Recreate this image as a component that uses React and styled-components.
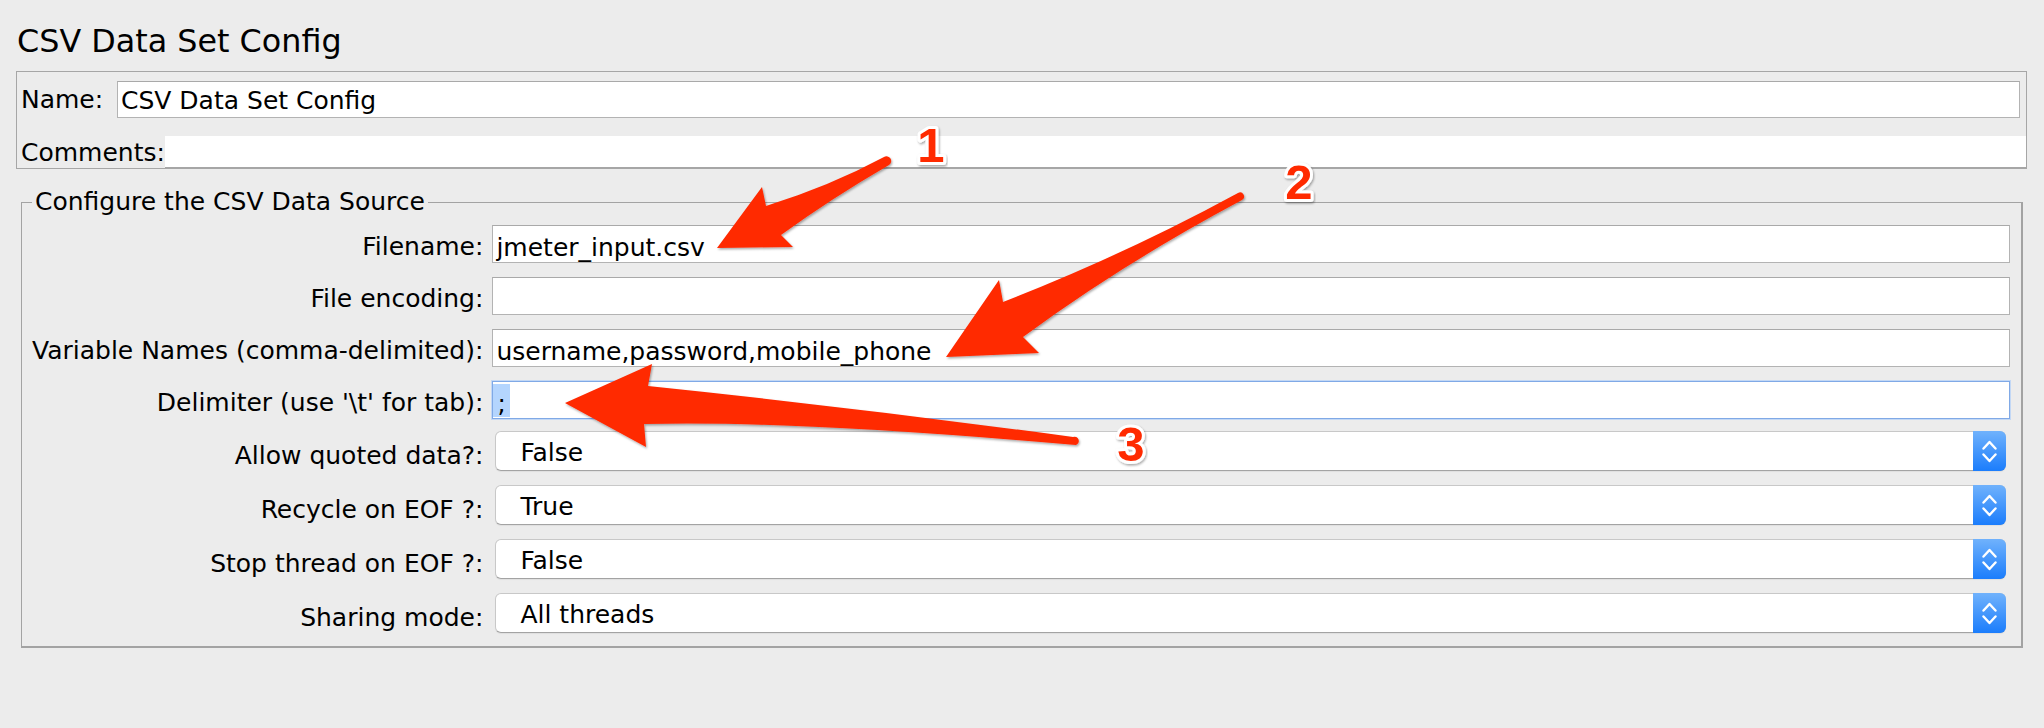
import React from 'react';
import styled, { createGlobalStyle, css } from 'styled-components';

const GlobalStyle = createGlobalStyle`
  html, body {
    margin: 0;
    padding: 0;
    background: #ececec;
  }
  body {
    font-family: "DejaVu Sans", "Liberation Sans", sans-serif;
    color: #000;
  }
`;

const Page = styled.div`
  position: relative;
  width: 2044px;
  height: 728px;
  box-sizing: border-box;
  padding: 21px 17px 0 16px;
  overflow: hidden;
`;

const Title = styled.h1`
  margin: 0 0 10px 1px;
  font-size: 31.8px;
  line-height: 40px;
  font-weight: normal;
`;

const NamePanel = styled.div`
  border: 1px solid #a6a6a6;
  padding: 9px 6px 0 4px;
`;

const NameRow = styled.div`
  display: flex;
  align-items: center;
  height: 37px;
`;

const CommentsRow = styled.div`
  display: flex;
  align-items: stretch;
  height: 32px;
  margin: 18px -6px 0 0;
`;

const Label = styled.span`
  font-size: 25px;
  white-space: nowrap;
  flex: none;
  ${(p) => p.$width && css`width: ${p.$width}px;`}
  ${(p) => p.$right && css`
    text-align: right;
    justify-self: end;
    align-self: center;
    padding-top: 4px;
  `}
  ${(p) => p.$stretch && css`
    display: flex;
    align-items: center;
  `}
`;

const TextField = styled.div`
  flex: 1;
  height: ${(p) => p.$height || 38}px;
  box-sizing: border-box;
  background: #fff;
  border: 1px solid #b3b3b3;
  border-top-color: #a9a9a9;
  padding: 0 3px;
  display: flex;
  align-items: center;
  font-size: 25px;
  white-space: nowrap;
  ${(p) => p.$focused && css`
    border-color: #80a9e6;
    box-shadow: 0 0 0 1px #c3d8f5;
  `}
`;

const FieldText = styled.span`
  padding-top: ${(p) => p.$shift || 6}px;
`;

const Selection = styled.span`
  display: inline-flex;
  align-items: center;
  height: 33px;
  box-sizing: border-box;
  margin-left: -3px;
  padding: 6px 4px 0;
  background: #b4d5fe;
`;

const CommentsField = styled.div`
  flex: 1;
  background: #fff;
  border-bottom: 1px solid #a6a6a6;
`;

const Group = styled.fieldset`
  margin: 18px 4px 0 5px;
  padding: 8px 11px 11px 10px;
  border: 1px solid #a3a3a3;
  border-right-width: 2px;
  border-bottom-width: 2px;
  min-width: 0;
`;

const Legend = styled.legend`
  margin-left: 0;
  padding: 0 3px;
  font-size: 25px;
  line-height: 30px;
`;

const Form = styled.div`
  display: grid;
  grid-template-columns: max-content 1fr;
  column-gap: 9px;
  row-gap: 14px;
  align-items: center;
`;

const Select = styled.div`
  display: flex;
  height: 40px;
  box-sizing: border-box;
  margin: -2px 4px 2px 3px;
  background: #fff;
  border: 1px solid #c8c8c8;
  border-bottom-color: #a3a3a3;
  border-radius: 6px;
  box-shadow: 0 1px 1px rgba(0, 0, 0, 0.06);
`;

const SelectValue = styled.span`
  flex: 1;
  display: flex;
  align-items: center;
  padding: 3px 0 0 24px;
  font-size: 25px;
`;

const SelectButton = styled.span`
  width: 33px;
  margin: -1px -1px -1px 0;
  display: flex;
  align-items: center;
  justify-content: center;
  border-radius: 0 6px 6px 0;
  background: linear-gradient(#70b2fc, #1b7dfc);
`;

const Overlay = styled.svg`
  position: absolute;
  left: 0;
  top: 0;
  pointer-events: none;
`;

const Chevrons = () => (
  <svg width="15" height="23" viewBox="0 0 15 23">
    <path
      d="M1.5 8.5 L7.5 2 L13.5 8.5 M1.5 14.5 L7.5 21 L13.5 14.5"
      fill="none"
      stroke="#fff"
      strokeWidth="2.4"
      strokeLinecap="round"
      strokeLinejoin="round"
    />
  </svg>
);

const textRows = [
  { label: 'Filename:', value: 'jmeter_input.csv' },
  { label: 'File encoding:', value: '' },
  { label: 'Variable Names (comma-delimited):', value: 'username,password,mobile_phone' },
  { label: "Delimiter (use '\\t' for tab):", value: ';', focused: true },
];

const selectRows = [
  { label: 'Allow quoted data?:', value: 'False' },
  { label: 'Recycle on EOF ?:', value: 'True' },
  { label: 'Stop thread on EOF ?:', value: 'False' },
  { label: 'Sharing mode:', value: 'All threads' },
];

const arrows = [
  'M717 248 L762 187 L766 206 Q830 186 884 157 A4 4 0 0 1 889 165 Q832 198 781 235 L793 247 Z',
  'M946 357 L999 280 L1003 302 Q1126 254 1238 193 A4 4 0 0 1 1242 200 Q1122 264 1023 337 L1039 353 Z',
  'M565 403 L652 364 L648 386 Q860 408 1073 437 A4 4 0 0 1 1076 445 Q790 420 644 424 L646 447 Z',
];

const numbers = [
  { n: '1', x: 931, y: 162 },
  { n: '2', x: 1299, y: 199 },
  { n: '3', x: 1131, y: 461 },
];

const Annotations = () => (
  <Overlay width="2044" height="728" viewBox="0 0 2044 728">
    <defs>
      <filter id="shade" x="-10%" y="-10%" width="120%" height="120%">
        <feDropShadow dx="1" dy="1.5" stdDeviation="1.2" floodColor="#000" floodOpacity="0.35" />
      </filter>
    </defs>
    {arrows.map((d, i) => (
      <path key={i} d={d} fill="#ff2900" filter="url(#shade)" />
    ))}
    {numbers.map((t) => (
      <text
        key={t.n}
        x={t.x}
        y={t.y}
        textAnchor="middle"
        fontFamily='"Liberation Sans", Arial, sans-serif'
        fontWeight="bold"
        fontSize="49"
        fill="#ff2900"
        stroke="#fff"
        strokeWidth="6"
        strokeLinejoin="round"
        paintOrder="stroke"
        filter="url(#shade)"
      >
        {t.n}
      </text>
    ))}
  </Overlay>
);

export default function App() {
  return (
    <Page>
      <GlobalStyle />
      <Title>CSV Data Set Config</Title>
      <NamePanel>
        <NameRow>
          <Label $width={96}>Name:</Label>
          <TextField $height={37}>
            <FieldText $shift={2}>CSV Data Set Config</FieldText>
          </TextField>
        </NameRow>
        <CommentsRow>
          <Label $stretch>Comments:</Label>
          <CommentsField />
        </CommentsRow>
      </NamePanel>
      <Group>
        <Legend>Configure the CSV Data Source</Legend>
        <Form>
          {textRows.map((r) => (
            <React.Fragment key={r.label}>
              <Label $right>{r.label}</Label>
              <TextField $focused={r.focused}>
                {r.focused ? (
                  <Selection>{r.value}</Selection>
                ) : (
                  <FieldText>{r.value}</FieldText>
                )}
              </TextField>
            </React.Fragment>
          ))}
          {selectRows.map((r) => (
            <React.Fragment key={r.label}>
              <Label $right>{r.label}</Label>
              <Select>
                <SelectValue>{r.value}</SelectValue>
                <SelectButton>
                  <Chevrons />
                </SelectButton>
              </Select>
            </React.Fragment>
          ))}
        </Form>
      </Group>
      <Annotations />
    </Page>
  );
}
